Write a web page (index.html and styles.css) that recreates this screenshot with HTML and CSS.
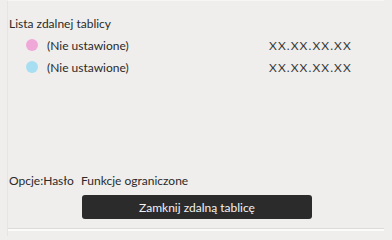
FILE: index.html
```html
<!DOCTYPE html>
<html lang="pl">
<head>
<meta charset="utf-8">
<link rel="stylesheet" href="styles.css">
</head>
<body>
<div class="panel">
  <div class="title">Lista zdalnej tablicy</div>
  <ul class="list">
    <li class="row"><span class="dot pink"></span><span class="name">(Nie ustawione)</span><span class="addr">XX.XX.XX.XX</span></li>
    <li class="row"><span class="dot blue"></span><span class="name">(Nie ustawione)</span><span class="addr">XX.XX.XX.XX</span></li>
  </ul>
  <div class="spacer"></div>
  <div class="options"><span class="opt-label">Opcje:Hasło</span><span class="opt-value">Funkcje ograniczone</span></div>
  <div class="actions"><button class="close-btn">Zamknij zdalną tablicę</button></div>
  <div class="rule"></div>
</div>
</body>
</html>
```
FILE: styles.css
```css
html, body {
  margin: 0;
  padding: 0;
}
body {
  width: 392px;
  height: 236px;
  background: #efeeec;
  font-family: Lato, "Noto Sans", sans-serif;
  font-size: 12px;
  color: #2a2a2a;
  overflow: hidden;
}
.panel {
  height: 236px;
  box-sizing: border-box;
  margin-left: 7px;
  margin-right: 8px;
  border-left: 1px solid #e6e5e3;
  border-top: 1px solid #f6f6f5;
  display: flex;
  flex-direction: column;
  padding-top: 15px;
}
.title {
  padding-left: 1px;
  line-height: 16px;
}
.list {
  list-style: none;
  margin: 2px 0 0;
  padding: 0;
}
.row {
  display: flex;
  align-items: center;
  height: 22px;
}
.dot {
  width: 12px;
  height: 12px;
  border-radius: 50%;
  margin-left: 18px;
  margin-right: 9px;
}
.pink { background: #f0a8d8; }
.blue { background: #a8def2; }
.name {
  width: 222px;
}
.addr {
  font-size: 12px;
  color: #3a3a3a;
  letter-spacing: 1.1px;
}
.spacer { flex: 1; }
.options {
  display: flex;
  line-height: 16px;
  padding-left: 1px;
}
.opt-label { width: 72px; }
.actions {
  display: flex;
  padding-left: 74px;
  margin-top: 6px;
}
.close-btn {
  width: 230px;
  height: 24px;
  border: none;
  border-radius: 3px;
  background: #2c2b2b;
  color: #f2f2f2;
  font-family: Lato, "Noto Sans", sans-serif;
  font-size: 12px;
  padding: 0;
}
.rule {
  margin-top: 9px;
  height: 2px;
  border-top: 1px solid #dcdbd8;
  background: #fbfbfa;
  margin-bottom: 5px;
}
```
